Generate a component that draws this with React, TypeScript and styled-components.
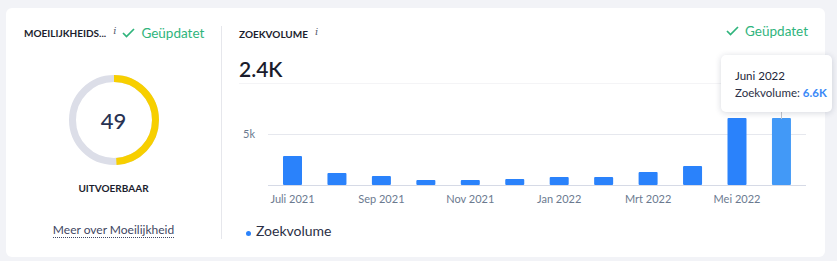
import styled, { createGlobalStyle } from "styled-components";

const GlobalStyle = createGlobalStyle`
  body {
    margin: 0;
    background: #f2f3f7;
    font-family: "Lato", "Liberation Sans", sans-serif;
  }
`;

const Page = styled.div`
  padding: 8px 12px 4px 6px;
`;

const Card = styled.div`
  position: relative;
  display: flex;
  background: #fff;
  border-radius: 6px;
  padding: 18px 0;
  height: 213px;
`;

const LeftCol = styled.div`
  width: 179px;
  flex-shrink: 0;
  padding: 0 18px;
  border-right: 1px solid #e6e7ec;
  display: flex;
  flex-direction: column;
  align-items: center;
`;

const RightCol = styled.div`
  flex: 1;
  padding: 0 17px;
  display: flex;
  flex-direction: column;
`;

const HeaderRow = styled.div<{ $spread?: boolean }>`
  display: flex;
  align-items: center;
  align-self: stretch;
  flex-shrink: 0;
  justify-content: ${(p) => (p.$spread ? "space-between" : "flex-start")};
  height: 14px;
  margin-top: ${(p) => (p.$spread ? "-2px" : "0")};
`;

const Title = styled.span`
  font-size: 10px;
  font-weight: 700;
  color: #1c1e2e;
`;

const Info = styled.span`
  font-family: "DejaVu Serif", serif;
  font-style: italic;
  font-size: 10px;
  color: #555a6e;
  margin-left: 7px;
  position: relative;
  top: -3px;
`;

const Updated = styled.span`
  display: flex;
  align-items: center;
  gap: 6px;
  color: #2fb47c;
  font-size: 13.5px;
  margin-left: 6px;
`;

const DonutWrap = styled.div`
  position: relative;
  width: 90px;
  height: 90px;
  flex-shrink: 0;
  margin-top: 35px;
`;

const DonutValue = styled.div`
  position: absolute;
  inset: 0;
  display: grid;
  place-content: center;
  font-size: 22px;
  font-weight: 500;
  color: #283252;
`;

const Label = styled.div`
  margin-top: 17px;
  font-size: 10px;
  font-weight: 700;
  color: #1c1e2e;
`;

const MoreLink = styled.a`
  margin-top: auto;
  margin-bottom: 1px;
  font-size: 12px;
  color: #3f4763;
  text-decoration: none;
  border-bottom: 1px dotted #3f4763;
  line-height: 15px;
`;

const BigValue = styled.div`
  flex-shrink: 0;
  margin-top: 17px;
  font-size: 21px;
  font-weight: 600;
  color: #1a1c2c;
  line-height: 28px;
  border-bottom: 1px solid #f4f4f6;
`;

const Chart = styled.svg`
  display: block;
  flex-shrink: 0;
  margin-top: 6px;
  font-family: "Lato", "Liberation Sans", sans-serif;
`;

const Legend = styled.div`
  display: flex;
  align-items: center;
  gap: 5px;
  margin-top: 13px;
  padding-left: 7px;
  font-size: 14px;
  line-height: 16px;
  color: #2b2f45;
`;

const Dot = styled.span`
  width: 5px;
  height: 5px;
  border-radius: 50%;
  background: #2a82fb;
  margin-top: 4px;
`;

const Tooltip = styled.div`
  position: absolute;
  left: 715px;
  top: 47px;
  width: 97px;
  padding: 12px 0 11px 14px;
  background: #fff;
  border-radius: 5px;
  box-shadow: 0 1px 6px rgba(30, 40, 70, 0.18);
  color: #2b2f45;
  font-size: 11.5px;
  line-height: 17px;
`;

const TipTitle = styled.div`
  color: #23263a;
`;

const TipValue = styled.b`
  color: #3a89f7;
  font-weight: 700;
`;

const Check = () => (
  <svg width="13" height="10" viewBox="0 0 13 10">
    <polyline points="1,5 4.5,8.5 12,1" fill="none" stroke="#2fb47c" strokeWidth="1.7" />
  </svg>
);

const Donut = ({ value }: { value: number }) => {
  const r = 41.5;
  const c = 2 * Math.PI * r;
  return (
    <svg width="90" height="90" viewBox="0 0 90 90">
      <circle cx="45" cy="45" r={r} fill="none" stroke="#dcdee8" strokeWidth="7" />
      <circle
        cx="45"
        cy="45"
        r={r}
        fill="none"
        stroke="#f7cf00"
        strokeWidth="7"
        strokeDasharray={`${(c * value) / 100} ${c}`}
        transform="rotate(-90 45 45)"
      />
    </svg>
  );
};

const data = [2.85, 1.2, 0.85, 0.5, 0.5, 0.6, 0.8, 0.8, 1.25, 1.85, 6.6, 6.6];
const labels = ["Juli 2021", "", "Sep 2021", "", "Nov 2021", "", "Jan 2022", "", "Mrt 2022", "", "Mei 2022", ""];

const BarChart = () => {
  const base = 95;
  const scale = 51 / 5;
  return (
    <Chart width="568" height="120" viewBox="0 0 568 120">
      <line x1="29" y1="44.5" x2="567" y2="44.5" stroke="#e6e8ee" />
      <text x="4" y="48" fontSize="11" fill="#6b7a8f">5k</text>
      {data.map((v, i) => {
        const x = 44 + i * 44.45;
        const h = Math.round(v * scale);
        return (
          <g key={i}>
            <rect
              x={x}
              y={base - h}
              width="19"
              height={h}
              rx="1"
              fill={i === 11 ? "#4299f7" : "#2a82fb"}
            />
            {labels[i] && (
              <text x={x + 9.5} y="113" fontSize="11" fill="#6b7a8f" textAnchor="middle">
                {labels[i]}
              </text>
            )}
          </g>
        );
      })}
      <line x1="29" y1="95.5" x2="567" y2="95.5" stroke="#d6dae6" />
      <line x1="542.5" y1="22" x2="542.5" y2="29" stroke="#c4c6cc" />
    </Chart>
  );
};

export default function App() {
  return (
    <Page>
      <GlobalStyle />
      <Card>
        <LeftCol>
          <HeaderRow>
            <Title>MOEILIJKHEIDS...</Title>
            <Info>i</Info>
            <Updated>
              <Check />
              Geüpdatet
            </Updated>
          </HeaderRow>
          <DonutWrap>
            <Donut value={49} />
            <DonutValue>49</DonutValue>
          </DonutWrap>
          <Label>UITVOERBAAR</Label>
          <MoreLink href="#">Meer over Moeilijkheid</MoreLink>
        </LeftCol>
        <RightCol>
          <HeaderRow $spread>
            <span>
              <Title>ZOEKVOLUME</Title>
              <Info>i</Info>
            </span>
            <Updated>
              <Check />
              Geüpdatet
            </Updated>
          </HeaderRow>
          <BigValue>2.4K</BigValue>
          <BarChart />
          <Legend>
            <Dot />
            Zoekvolume
          </Legend>
        </RightCol>
        <Tooltip>
          <TipTitle>Juni 2022</TipTitle>
          <div>
            Zoekvolume: <TipValue>6.6K</TipValue>
          </div>
        </Tooltip>
      </Card>
    </Page>
  );
}
